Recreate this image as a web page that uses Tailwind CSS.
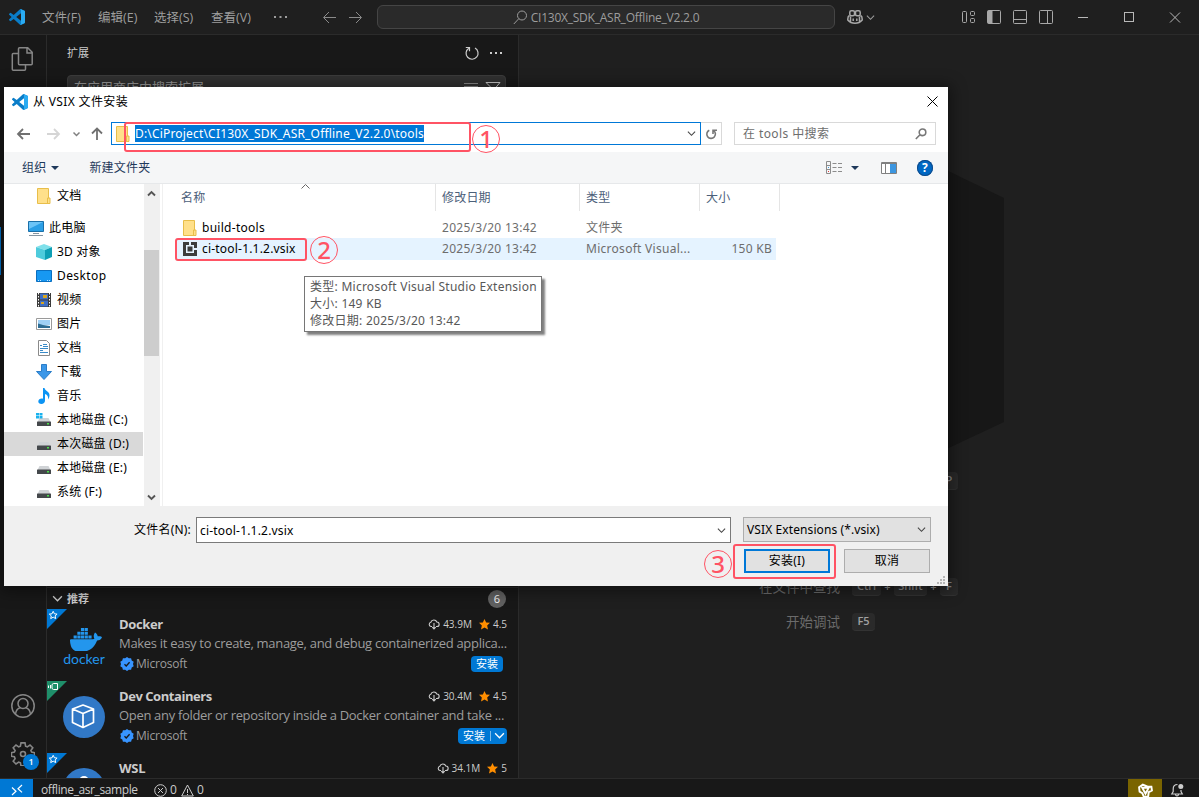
<!DOCTYPE html>
<html lang="zh-CN">

<head>
    <meta charset="UTF-8" />
    <meta name="viewport" content="width=device-width, initial-scale=1.0">
    <title>CI130X_SDK_ASR_Offline_V2.2.0</title>
    <script src="https://cdn.jsdelivr.net/npm/@tailwindcss/browser@4"></script>
</head>

<body class="bg-[#181818]">
    <!-- shared icons -->
    <svg class="hidden">
        <symbol id="vscode" viewBox="0 0 24 24">
            <path fill="#0a7dc8" d="M23.15 2.587L18.21.21a1.494 1.494 0 0 0-1.705.29l-9.46 8.63-4.12-3.128a.999.999 0 0 0-1.276.057L.327 7.261A1 1 0 0 0 .326 8.74L3.899 12 .326 15.26a1 1 0 0 0 .001 1.479L1.65 17.94a.999.999 0 0 0 1.276.057l4.12-3.128 9.46 8.63a1.492 1.492 0 0 0 1.704.29l4.942-2.377A1.5 1.5 0 0 0 24 20.06V3.939a1.5 1.5 0 0 0-.85-1.352zm-5.146 14.861L10.826 12l7.178-5.448v10.896z" />
            <path fill="#2aabf2" d="M18.21.21 23.15 2.587A1.5 1.5 0 0 1 24 3.939V20.06a1.5 1.5 0 0 1-.85 1.35l-4.94 2.38a1.49 1.49 0 0 1-1.7-.29c.55.4 1.49 0 1.49-1V1.5c0-1-.94-1.4-1.49-1a1.49 1.49 0 0 1 1.7-.29z" />
        </symbol>
        <symbol id="folder" viewBox="0 0 14 16">
            <path fill="#ffe08a" stroke="#e8be4a" d="M.5.5h11v9.500h1.500v5.500H.5z" />
            <path stroke="#e8be4a" d="M10.500 15v-5H12" fill="none" />
        </symbol>
        <symbol id="drive" viewBox="0 0 16 16">
            <path fill="#d0d3d6" d="M3.500 6h9l2 4h-13z" />
            <rect x="1" y="9.500" width="14" height="4.500" rx=".6" fill="#44484b" />
            <rect x="11" y="11" width="2" height="1.500" fill="#4be04b" />
        </symbol>
        <symbol id="cloud" viewBox="0 0 12 12">
            <path fill="none" stroke="#ccc" stroke-width="1.100" d="M4 8.500H3A2.200 2.200 0 0 1 2.900 4.200 3.100 3.100 0 0 1 8.800 4 2.200 2.200 0 0 1 9 8.500H8M6 5v5.800M4.300 9.200 6 10.900l1.700-1.700" />
        </symbol>
        <symbol id="star" viewBox="0 0 12 12">
            <path fill="#ff8e00" d="M6 0 7.800 3.800l4.200.4-3.100 2.900.9 4.300L6 9.300l-3.800 2.100.9-4.300L0 4.200l4.200-.4z" />
        </symbol>
        <symbol id="verified" viewBox="0 0 14 14">
            <path fill="#3794ff" d="M7 0l1.800 1.300 2.300-.1.600 2.200L13.700 4.800 13 7l.7 2.200-2 1.400-.6 2.200-2.300-.1L7 14l-1.800-1.300-2.300.1-.6-2.200-2-1.400L1 7 .3 4.800l2-1.400.6-2.200 2.300.1z" />
            <path fill="none" stroke="#181818" stroke-width="1.300" d="M4.500 7.300 6.200 9l3.400-3.800" />
        </symbol>
        <symbol id="chev" viewBox="0 0 10 10">
            <path fill="none" stroke="currentColor" stroke-width="1.200" d="M1 3l4 4 4-4" />
        </symbol>
        <symbol id="badge-star" viewBox="0 0 20 20">
            <path fill="#0078d4" d="M0 0h20L0 20z" />
            <path fill="none" stroke="#fff" d="M6.200 2.300 7.400 4.800l2.700.3-2 1.800.6 2.700-2.500-1.400-2.500 1.400.6-2.700-2-1.800 2.700-.3z" />
        </symbol>
    </svg>

    <div class="relative w-[1199px] h-[797px] overflow-hidden flex flex-col bg-[#181818] text-[#ccc] font-['Open_Sans','Noto_Sans_CJK_SC',sans-serif]">

        <!-- Title bar -->
        <header class="h-[35px] shrink-0 flex items-center bg-[#1f1f1f] border-b border-[#2b2b2b] text-[13px] text-[#9d9d9d]">
            <svg class="w-4 h-4 ml-[9px] mr-[17px]"><use href="#vscode" /></svg>
            <nav class="flex items-center w-[278px] whitespace-nowrap text-[12.5px]">
                <span class="w-14 pt-0.5">文件(F)</span>
                <span class="w-14 pt-0.5">编辑(E)</span>
                <span class="w-[57px] pt-0.5">选择(S)</span>
                <span class="w-[62px] pt-0.5">查看(V)</span>
                <svg class="w-4 h-5" viewBox="0 0 16 20" fill="#9d9d9d"><path d="M1 9h2v2H1zM6.500 9h2v2h-2zM12 9h2v2h-2z" /></svg>
            </nav>
            <svg class="w-[42px] h-4 mr-[15px]" viewBox="0 0 42 16" fill="none" stroke="#8a8a8a"><path d="M4 8.500h12M9 3 3.500 8.500 9 14M29 8.500h12M36 3l5.500 5.500L36 14" /></svg>
            <div class="w-[458px] h-6 rounded-md border border-[#454545] bg-[#2a2a2a] flex items-center justify-center gap-[3px] text-[12px] tracking-[-0.23px]">
                <svg class="w-[15px] h-[15px]" viewBox="0 0 15 15" fill="none" stroke="#9d9d9d"><circle cx="9" cy="5.500" r="4.500" /><path d="M5.800 8.700.8 14" /></svg>
                <span class="pt-0.5">CI130X_SDK_ASR_Offline_V2.2.0</span>
            </div>
            <svg class="w-4 h-4 ml-3" viewBox="0 0 16 16" fill="none" stroke="#a8a8a8" stroke-width="1.500"><rect x="2.800" y="1.800" width="4.700" height="5" rx="1.500" /><rect x="8.500" y="1.800" width="4.700" height="5" rx="1.500" /><path d="M2.500 6.500C.5 7.500.8 9 .8 11c2 2.500 5 3.300 7.200 3.300s5.200-.8 7.200-3.300c0-2 .3-3.500-1.700-4.500M3.500 7.500v5M12.500 7.500v5M6.200 9.500v2.500M9.800 9.500v2.500" /></svg>
            <svg class="w-[9px] h-[9px] ml-[3px]"><use href="#chev" /></svg>
            <div class="ml-auto flex">
                <svg class="w-[104px] h-4" viewBox="0 0 104 16" fill="none" stroke="#a8a8a8">
                    <rect x="7.500" y="2.500" width="4" height="11" rx="1" /><rect x="15.500" y="2.500" width="4" height="4" rx="1" /><rect x="15.500" y="9.500" width="4" height="4" rx="1" />
                    <rect x="32.500" y="1.500" width="13" height="13" rx="1" /><path fill="#a8a8a8" d="M33 2h4v12h-4z" />
                    <rect x="58.500" y="1.500" width="13" height="13" rx="1" /><path d="M59 10.500h12" />
                    <rect x="84.500" y="1.500" width="13" height="13" rx="1" /><path d="M92.500 2v12" />
                </svg>
                <svg class="w-[140px] h-4" viewBox="0 0 140 16" fill="none" stroke="#b8b8b8"><path d="M19 8.500h10" /><rect x="65.500" y="3.500" width="9" height="9" /><path d="m111 3.500 10 10m0-10-10 10" /></svg>
            </div>
        </header>

        <main class="h-[743px] shrink-0 flex">
            <!-- Activity bar -->
            <aside class="w-[47px] shrink-0 border-r border-[#2b2b2b] flex flex-col">
                <div class="h-12 flex items-center justify-center">
                    <svg class="w-6 h-6" viewBox="0 0 24 24" fill="none" stroke="#868686" stroke-width="1.500"><path d="M8.500.8h8.200l4.500 4.500v11.400a1 1 0 0 1-1 1H8.500a1 1 0 0 1-1-1V1.800a1 1 0 0 1 1-1zM16 1v5h5M7 6.500H2.300a1 1 0 0 0-1 1v14.700a1 1 0 0 0 1 1h11.200a1 1 0 0 0 1-1V18" /></svg>
                </div>
                <div class="h-36"></div>
                <div class="h-12 border-l border-[#0078d4]"></div>
                <div class="mt-auto h-12 flex items-center justify-center">
                    <svg class="w-6 h-6" viewBox="0 0 24 24" fill="none" stroke="#868686" stroke-width="1.500"><circle cx="12" cy="12" r="11.200" /><circle cx="12" cy="9.500" r="5" /><path d="M4.500 20c.5-3.500 2.500-6 5-6.300M19.500 20c-.5-3.500-2.500-6-5-6.300" /></svg>
                </div>
                <div class="relative h-12 flex items-center justify-center">
                    <svg class="w-6 h-6" viewBox="0 0 24 24" fill="none" stroke="#868686" stroke-width="1.600"><path d="M10 .9h4l.6 3.300 1.700.7 2.700-1.900L21.800 5.800l-1.900 2.700.7 1.600 3 .6v3.600l-3 .5-.7 1.800 1.900 2.600-2.800 2.800-2.700-1.900-1.700.7-.6 3H10l-.6-3-1.700-.7L5 22 2.200 19.200l1.900-2.600-.7-1.800-3-.5v-3.600l3-.6.7-1.600L2.200 5.800 5 3l2.700 1.900 1.700-.7z" /><circle cx="12" cy="12" r="2.500" /></svg>
                    <span class="absolute left-[23px] top-6 w-4 h-4 rounded-full bg-[#0078d4] text-white text-[9px] font-semibold leading-4 text-center">1</span>
                </div>
            </aside>

            <!-- Extensions side bar -->
            <section class="w-[472px] shrink-0 border-r border-[#2b2b2b] flex flex-col">
                <div class="h-[35px] pl-5 pr-[14px] flex items-center text-[11px]">
                    <span class="pt-0.5">扩展</span>
                    <svg class="ml-auto w-4 h-4 mr-2" viewBox="0 0 16 16" fill="none" stroke="#ccc" stroke-width="1.200"><path d="M4.800 3.200A6 6 0 1 0 11 3M1.800 2.500h3.700v3.700" /></svg>
                    <svg class="w-4 h-4" viewBox="0 0 16 16" fill="#ccc"><path d="M2 7h2v2H2zM7 7h2v2H7zM12 7h2v2h-2z" /></svg>
                </div>
                <div class="mt-[5px] ml-5 mr-3 h-[26px] pr-[3px] rounded-sm border border-[#3c3c3c] bg-[#313131] flex items-center text-[13px] text-[#989898]">
                    <span class="pl-1.5">在应用商店中搜索扩展</span>
                    <svg class="ml-auto w-[38px] h-4" viewBox="0 0 38 16" fill="none" stroke="#c5c5c5"><path stroke="#888" d="M0 3.500h14M0 6.500h14" /><path d="M22 2.500h14L31 8.500v4h-3v-4z" /></svg>
                </div>
                <div class="mt-auto h-[191px] overflow-hidden border-t border-[#2b2b2b]">
                    <div class="h-[21px] pl-[5px] pr-3 flex items-center text-[11px] font-bold">
                        <svg class="w-[11px] h-[11px] mr-1"><use href="#chev" /></svg>
                        <span class="pt-0.5">推荐</span>
                        <span class="ml-auto w-[18px] h-[18px] rounded-full bg-[#616161] text-[#f8f8f8] text-[11px] leading-[18px] text-center font-normal">6</span>
                    </div>

                    <div class="relative h-[72px] pl-4 pr-[11px] flex gap-[14px]">
                        <svg class="absolute left-0 top-0 w-5 h-5"><use href="#badge-star" /></svg>
                        <div class="w-[42px] shrink-0 pt-[17px] flex flex-col items-center">
                            <svg class="w-8 h-[25px] ml-1" viewBox="0 2 24 18" preserveAspectRatio="none" fill="#2396ed">
                                <path d="M8.200 3.400h2.400v2.200H8.200zM2.700 8.800h2.400V11H2.700zM5.500 8.800h2.400V11H5.500zM8.200 8.800h2.400V11H8.200zM11 8.800h2.400V11H11zM13.800 8.800h2.400V11h-2.400zM5.500 6.100h2.400v2.200H5.500zM8.200 6.100h2.400v2.200H8.200zM11 6.100h2.400v2.200H11zM11 3.400h2.400v2.200H11z" />
                                <path d="M23.763 9.890c-.065-.051-.672-.51-1.954-.51-.338.001-.676.03-1.010.087-.248-1.700-1.653-2.530-1.716-2.566l-.344-.199-.226.327c-.284.438-.49.922-.612 1.430-.23.97-.09 1.882.403 2.661-.595.332-1.550.413-1.744.420H.751a.751.751 0 0 0-.75.748 11.376 11.376 0 0 0 .692 4.062c.545 1.428 1.355 2.480 2.410 3.124 1.180.723 3.100 1.137 5.275 1.137.983.003 1.963-.086 2.930-.266a12.248 12.248 0 0 0 3.823-1.389c.98-.567 1.860-1.288 2.610-2.136 1.252-1.418 1.998-2.997 2.553-4.400h.221c1.372 0 2.215-.549 2.680-1.009.309-.293.55-.65.707-1.046l.098-.288Z" />
                            </svg>
                            <span class="font-[Lato] text-[14px] leading-4 text-[#2396ed]">docker</span>
                        </div>
                        <div class="flex-1 min-w-0 pt-1.5 text-[13px]">
                            <div class="h-[18px] flex items-center text-[10px]">
                                <span class="mr-auto pt-0.5 text-[13px] font-bold tracking-[-0.35px]">Docker</span>
                                <svg class="w-3 h-3 mr-[3px]"><use href="#cloud" /></svg>43.9M
                                <svg class="w-[11px] h-[11px] ml-[7px] mr-[3px]"><use href="#star" /></svg>4.5
                            </div>
                            <p class="leading-5 text-[#9d9d9d] whitespace-nowrap tracking-[-0.3px]">Makes it easy to create, manage, and debug containerized applica...</p>
                            <div class="h-[21px] flex items-center text-[#9d9d9d] text-[12px] tracking-[-0.2px]">
                                <svg class="w-[14px] h-[14px] ml-px mr-[2px]"><use href="#verified" /></svg>Microsoft
                                <span class="ml-auto mr-1 w-8 h-4 rounded-sm bg-[#0078d4] text-white text-[11px] leading-4 text-center tracking-normal">安装</span>
                            </div>
                        </div>
                    </div>

                    <div class="relative h-[72px] pl-4 pr-[11px] flex gap-[14px]">
                        <svg class="absolute left-0 top-0 w-5 h-5" viewBox="0 0 20 20"><path fill="#1f8f6a" d="M0 0h20L0 20z" /><path fill="none" stroke="#fff" d="M6.500 2.500h4v6h-4l-1.500-1v-4zM3.500 4v3.500M1.500 4.500v2.500" /></svg>
                        <svg class="w-[42px] h-[42px] mt-[15px] shrink-0" viewBox="0 0 42 42"><circle cx="21" cy="21" r="21" fill="#3178c6" /><path fill="none" stroke="#fff" stroke-width="1.700" stroke-linejoin="round" d="m20 9 10.500 4v13.500L20 31.500 9.500 26.500V13zM9.500 13 20 17.500 30.500 13M20 17.500v14" /></svg>
                        <div class="flex-1 min-w-0 pt-1.5 text-[13px]">
                            <div class="h-[18px] flex items-center text-[10px]">
                                <span class="mr-auto pt-0.5 text-[13px] font-bold tracking-[-0.45px]">Dev Containers</span>
                                <svg class="w-3 h-3 mr-[3px]"><use href="#cloud" /></svg>30.4M
                                <svg class="w-[11px] h-[11px] ml-[7px] mr-[3px]"><use href="#star" /></svg>4.5
                            </div>
                            <p class="leading-5 text-[#9d9d9d] whitespace-nowrap tracking-[-0.32px]">Open any folder or repository inside a Docker container and take ...</p>
                            <div class="h-[21px] flex items-center text-[#9d9d9d] text-[12px] tracking-[-0.2px]">
                                <svg class="w-[14px] h-[14px] ml-px mr-[2px]"><use href="#verified" /></svg>Microsoft
                                <span class="ml-auto w-[49px] h-4 rounded-sm bg-[#0078d4] text-white text-[11px] leading-4 pl-[5px] flex items-center tracking-normal">安装<i class="w-px h-2.5 ml-[5px] mr-[3px] bg-white/50"></i><svg class="w-[11px] h-[11px]"><use href="#chev" /></svg></span>
                            </div>
                        </div>
                    </div>

                    <div class="relative h-[72px] pl-4 pr-[11px] flex gap-[14px]">
                        <svg class="absolute left-0 top-0 w-5 h-5"><use href="#badge-star" /></svg>
                        <svg class="w-[42px] h-[42px] mt-[15px] shrink-0" viewBox="0 0 42 42"><circle cx="21" cy="21" r="21" fill="#3178c6" /><circle cx="21" cy="13" r="5" fill="#fff" /></svg>
                        <div class="flex-1 min-w-0 pt-1.5 text-[13px]">
                            <div class="h-[18px] flex items-center text-[10px]">
                                <span class="mr-auto pt-0.5 text-[13px] font-bold tracking-[-0.3px]">WSL</span>
                                <svg class="w-3 h-3 mr-[3px]"><use href="#cloud" /></svg>34.1M
                                <svg class="w-[11px] h-[11px] ml-[7px] mr-[3px]"><use href="#star" /></svg>5
                            </div>
                        </div>
                    </div>
                </div>
            </section>

            <!-- Editor watermark -->
            <section class="relative flex-1 bg-[#1f1f1f] pt-[437px] pl-[231px] text-[13.500px] text-[#6b6b6b]">
                <svg class="absolute left-[421px] top-[130px] w-[70px] h-[290px]" viewBox="0 0 70 290"><path fill="#171717" d="M0 2 64 33v224L0 287z" /></svg>
                <div class="relative w-[208px] text-[11px] font-semibold leading-4">
                    <div class="h-[18px] flex justify-end"><kbd class="w-[18px] h-[18px] rounded bg-[#2a2a2a] border-b border-[#333] text-center font-[Open_Sans] text-[#8a8a8a]">P</kbd></div>
                    <div class="mt-[88px] h-[18px] flex items-center justify-end text-[#8a8a8a]">
                        <span class="mr-3 shrink-0 text-[13.500px] font-normal text-[#6b6b6b]">在文件中查找</span>
                        <kbd class="w-[29px] shrink-0 h-[18px] rounded bg-[#2a2a2a] border-b border-[#333] text-center font-[Open_Sans]">Ctrl</kbd>
                        <span class="w-[13px] shrink-0 text-center">+</span>
                        <kbd class="w-[33px] shrink-0 h-[18px] rounded bg-[#2a2a2a] border-b border-[#333] text-center font-[Open_Sans]">Shift</kbd>
                        <span class="w-[13px] shrink-0 text-center">+</span>
                        <kbd class="w-[18px] shrink-0 h-[18px] rounded bg-[#2a2a2a] border-b border-[#333] text-center font-[Open_Sans]">F</kbd>
                    </div>
                    <div class="mt-[17px] h-[18px] flex items-center text-[#8a8a8a]">
                        <span class="ml-9 w-[66px] whitespace-nowrap text-[13.500px] font-normal text-[#6b6b6b]">开始调试</span>
                        <kbd class="w-[23px] h-[18px] rounded bg-[#2a2a2a] border-b border-[#333] text-center font-[Open_Sans] text-[#a0a0a0]">F5</kbd>
                    </div>
                </div>
            </section>
        </main>

        <!-- Status bar -->
        <footer class="h-[23px] shrink-0 flex items-center border-t border-[#2b2b2b] text-[12px] text-[#ccc]">
            <div class="w-[33px] h-full bg-[#0078d4] flex items-center justify-center mr-2">
                <svg class="w-3 h-3" viewBox="0 0 12 12" fill="none" stroke="#fff" stroke-width="1.200"><path d="m1 3.500 4 3.700L1 11M11 1 7 4.700l4 3.700" /></svg>
            </div>
            <span class="w-[113px] tracking-[-0.4px]">offline_asr_sample</span>
            <svg class="w-[13px] h-[13px] mr-[3px]" viewBox="0 0 13 13" fill="none" stroke="#ccc"><circle cx="6.500" cy="6.500" r="5.800" /><path d="m4 4 5 5m0-5L4 9" /></svg>0
            <svg class="w-[13px] h-[13px] ml-1 mr-[3px]" viewBox="0 0 13 13" fill="none" stroke="#ccc"><path d="M6.500 1 12.300 12H.7zM6.500 5v4M6.500 10v1" /></svg>0
            <div class="ml-auto w-[34px] h-full bg-[#7a6400] flex items-center justify-center">
                <svg class="w-[15px] h-[15px]" viewBox="0 0 14 14" fill="none" stroke="#fff" stroke-width="1.800"><path d="M1 4 4.500 1.500 9 3.500 12.500 3.500 13 7 10 8.500 9.500 12.500 5.500 13 4 9.500 1.500 8zM4 4.500h6L7 10z" /></svg>
            </div>
            <svg class="w-[14px] h-[14px] ml-2 mr-[15px]" viewBox="0 0 14 14" fill="none" stroke="#ccc" stroke-width="1.200"><path d="M7.500 1.500C4.500 1.500 3.200 3.500 3.200 6v2.500L1.800 11h10.500L11 8.500V7M5.500 11.500c.3 1.800 2.700 1.800 3 0" /><circle cx="10.800" cy="3.500" r="2.500" fill="#ccc" stroke="none" /></svg>
        </footer>

        <!-- File dialog window -->
        <div class="absolute left-1 top-[87px] w-[944px] h-[499px] bg-white shadow-[0_2px_14px_4px_rgba(0,0,0,0.4)] flex flex-col text-[12px] tracking-[0.2px] text-black font-['Noto_Sans','Noto_Sans_CJK_SC',sans-serif]">
            <div class="h-[29px] shrink-0 pl-2 pr-2.5 flex items-center">
                <svg class="w-4 h-4 mr-[5px]"><use href="#vscode" /></svg>
                <span class="tracking-[0.35px]">从 VSIX 文件安装</span>
                <svg class="ml-auto w-[11px] h-[11px]" viewBox="0 0 11 11" stroke="#000"><path d="m.5.5 10 10m0-10-10 10" /></svg>
            </div>

            <div class="h-9 shrink-0 pt-[6px] pl-3 pr-3 flex items-start">
                <svg class="w-[95px] h-[23px]" viewBox="0 0 95 23" fill="none" stroke-width="1.800">
                    <path stroke="#707070" d="M2 12h12M7 7l-5 5 5 5" />
                    <path stroke="#d5d5d5" d="M31 12h12M38 7l5 5-5 5" />
                    <path stroke="#808080" stroke-width="1.500" d="m57.500 10.500 3 3 3-3" />
                    <path stroke="#707070" d="M81 18V7M76 11.500l5-5 5 5" />
                </svg>
                <div class="w-[590px] h-[23px] border border-[#0078d7] pl-1 pr-[4px] flex items-center">
                    <svg class="w-[14px] h-4 mr-[5px]"><use href="#folder" /></svg>
                    <span class="h-[17px] leading-[17px] bg-[#0078d7] text-white whitespace-nowrap tracking-[0.18px]">D:\CiProject\CI130X_SDK_ASR_Offline_V2.2.0\tools</span>
                    <svg class="ml-auto w-[9px] h-[9px] text-[#444]"><use href="#chev" /></svg>
                </div>
                <div class="w-[21px] h-[23px] border border-l-0 border-[#d9d9d9] flex items-center justify-center mr-3">
                    <svg class="w-3 h-3" viewBox="0 0 12 12" fill="none" stroke="#777" stroke-width="1.600"><path d="M4.300 2.200a4.300 4.300 0 1 0 4 .2M8 6V2.200h4" /></svg>
                </div>
                <div class="w-[202px] h-[23px] border border-[#d9d9d9] pl-2 pr-2 flex items-center text-[#6d6d6d]">
                    <span class="tracking-[0.4px]">在 tools 中搜索</span>
                    <svg class="ml-auto w-3 h-3" viewBox="0 0 12 12" fill="none" stroke="#777" stroke-width="1.600"><circle cx="7.500" cy="4.300" r="3.300" /><path d="M5 6.800.8 11" /></svg>
                </div>
            </div>

            <div class="h-8 shrink-0 bg-[#f5f6f7] border-b border-[#e6e8ea] pl-[18px] pr-[15px] flex items-center text-[#1e395b]">
                <span>组织</span>
                <svg class="w-2 h-1 ml-[5px] mr-[30px]" viewBox="0 0 8 4"><path fill="#1e395b" d="M0 0h8L4 4z" /></svg>
                <span>新建文件夹</span>
                <svg class="ml-auto w-4 h-[14px]" viewBox="0 0 16 14" fill="none" stroke="#8c8c8c"><path d="M.5.5h4v12h-4zM.5 4.500h4M.5 8.500h4M6.500 2.500h4M12 2.500h4M6.500 6.500h4M12 6.500h4M6.500 10.500h4M12 10.500h4" /><path stroke="none" fill="#3c9be0" d="M2 6h1v1H2z" /><path stroke="none" fill="#e03c3c" d="M2 10h1v1H2z" /></svg>
                <svg class="w-2 h-1 ml-[9px] mr-[22px]" viewBox="0 0 8 4"><path fill="#1e395b" d="M0 0h8L4 4z" /></svg>
                <svg class="w-4 h-3 mr-5" viewBox="0 0 16 12"><path fill="#fff" stroke="#808080" d="M.5.5h15v11H.5z" /><path stroke="#808080" d="M4.500 1v10M.5 1.500h15" /><path fill="#3c96e0" d="M9 2h6v9H9z" /></svg>
                <span class="w-4 h-4 rounded-full bg-[#0068c4] ring-1 ring-inset ring-[#104a88] text-white text-[12px] leading-4 font-bold text-center">?</span>
            </div>

            <div class="h-[322px] shrink-0 flex">
                <!-- Navigation tree -->
                <ul class="w-[139px] h-[322px] overflow-hidden shrink-0 mr-px whitespace-nowrap">
                    <li class="h-6 mb-2 pl-8 flex items-center gap-[5px]"><svg class="w-4 h-4"><use href="#folder" /></svg>文档</li>
                    <li class="h-6 pl-6 flex items-center gap-[5px]">
                        <svg class="w-4 h-4" viewBox="0 0 16 16"><path fill="#2b9fe6" stroke="#1a6fa8" d="M.5 1.500h15v10H.5z" /><path fill="#6cc4f7" d="M1 2h14L1 9z" /><path stroke="#8795a1" d="M5 13.500h6M1 15.500h14" /></svg>此电脑</li>
                    <li class="h-6 pl-8 flex items-center gap-[5px]">
                        <svg class="w-4 h-4" viewBox="0 0 16 16"><path fill="#7fe0ea" d="m8 0 8 3-7 3-9-3z" /><path fill="#4ecbdc" d="m0 3 9 3v10l-9-3z" /><path fill="#0e9fb5" d="m9 6 7-3v10l-7 3z" /></svg>3D 对象</li>
                    <li class="h-6 pl-8 flex items-center gap-[5px]">
                        <svg class="w-4 h-4" viewBox="0 0 16 16"><path fill="#1798f2" stroke="#0a6fc0" d="M.5 2.500h15v11H.5z" /><path stroke="#bfe3ff" stroke-dasharray="1 1" d="M2 12.500h3M11 12.500h3" /></svg><span class="tracking-[0.4px]">Desktop</span></li>
                    <li class="h-6 pl-8 flex items-center gap-[5px]">
                        <svg class="w-4 h-4" viewBox="0 0 16 16"><path fill="#3a3a3a" d="M1 1h14v14H1z" /><path stroke="#fff" stroke-dasharray="1.500 1.500" d="M2.500 1v14M13.500 1v14" /><path fill="#3f6fc4" d="M4 1.500h8v6H4zM4 8.500h8v6H4z" /><path fill="#d9a520" d="M7 3h4v3H7zM5 10h3v2H5z" /></svg>视频</li>
                    <li class="h-6 pl-8 flex items-center gap-[5px]">
                        <svg class="w-4 h-4" viewBox="0 0 16 16"><path fill="#fff" stroke="#9a9a9a" d="M.5 2.500h15v11H.5z" /><path fill="#9fd0f5" d="M2 4h12v5H2z" /><path fill="#2d6d94" d="M2 7.500 7 9l7 1v2H2z" /></svg>图片</li>
                    <li class="h-6 pl-8 flex items-center gap-[5px]">
                        <svg class="w-4 h-4" viewBox="0 0 16 16"><path fill="#fff" stroke="#8a8a8a" d="M2.500.5h8l3 3v12h-11z" /><path stroke="#3a8bc8" d="M7 4.500h4M7 6.500h5M4 8.500h8M4 10.500h3M4 12.500h8M4 5.500h2" /></svg>文档</li>
                    <li class="h-6 pl-8 flex items-center gap-[5px]">
                        <svg class="w-4 h-4" viewBox="0 0 16 16"><path fill="#3b97e8" stroke="#2a7dc8" d="M5.500.5h5v7h5L8 15.500.5 7.500h5z" /></svg>下载</li>
                    <li class="h-6 pl-8 flex items-center gap-[5px]">
                        <svg class="w-4 h-4" viewBox="0 0 16 16"><path fill="#0c94f4" d="M7 0h1.500c.3 3 5 3.500 5 7 0 2-.5 3-1.500 4.500.5-3-.5-4.500-3-5.500v6.500C9 14.500 7.500 16 5.300 16 3.500 16 2.300 15 2.300 13.500c0-2 2.500-3.500 4.700-2.700z" /></svg>音乐</li>
                    <li class="h-6 pl-8 flex items-center gap-[5px]">
                        <svg class="w-4 h-4" viewBox="0 0 16 16"><use href="#drive" /><path fill="#19b2ee" d="M0 1h3v2.500H0zM3.500 1h3v2.500h-3zM0 4h3v2.500H0zM3.500 4h3v2.500h-3z" /></svg>本地磁盘 (C:)</li>
                    <li class="h-6 pl-8 flex items-center gap-[5px] bg-[#d9d9d9]"><svg class="w-4 h-4"><use href="#drive" /></svg>本次磁盘 (D:)</li>
                    <li class="h-6 pl-8 flex items-center gap-[5px]"><svg class="w-4 h-4"><use href="#drive" /></svg>本地磁盘 (E:)</li>
                    <li class="h-6 pl-8 flex items-center gap-[5px]"><svg class="w-4 h-4"><use href="#drive" /></svg>系统 (F:)</li>
                </ul>
                <div class="w-4 shrink-0 bg-[#f0f0f0] flex flex-col items-center pt-[5px] pb-1 pr-px text-[#555]">
                    <svg class="w-[9px] h-[9px] rotate-180" viewBox="0 0 9 9" fill="none" stroke="#555" stroke-width="1.900"><path d="m1 2.500 3.500 3.500L8 2.500" /></svg>
                    <div class="mt-[52px] w-[15px] h-[106px] bg-[#cdcdcd]"></div>
                    <svg class="mt-auto w-[9px] h-[9px]" viewBox="0 0 9 9" fill="none" stroke="#555" stroke-width="1.900"><path d="m1 2.500 3.500 3.500L8 2.500" /></svg>
                </div>

                <!-- File list -->
                <div class="relative flex-1 ml-0.5 border-l border-[#f0f0f0]">
                    <svg class="absolute left-[138px] top-0 w-[9px] h-[5px]" viewBox="0 0 9 5" fill="none" stroke="#666"><path d="m.5 4.500 4-4 4 4" /></svg>
                    <div class="h-[27px] flex items-center leading-[27px] text-[#4c607a]">
                        <span class="w-[273px] pl-[18px] border-r border-[#e5e5e5]">名称</span>
                        <span class="w-36 pl-1.5 border-r border-[#e5e5e5]">修改日期</span>
                        <span class="w-[120px] pl-1.5 border-r border-[#e5e5e5]">类型</span>
                        <span class="w-20 pl-1.5 border-r border-[#e5e5e5]">大小</span>
                    </div>
                    <div class="mt-[6px] ml-[13px] w-[600px] h-[21px] flex items-center text-[#6d6d6d] tracking-[0.28px]">
                        <span class="w-[266px] pl-[7px] flex items-center text-black"><svg class="w-[14px] h-4 mr-[5px]"><use href="#folder" /></svg>build-tools</span>
                        <span class="w-36">2025/3/20 13:42</span>
                        <span class="w-[115px]">文件夹</span>
                    </div>
                    <div class="ml-[13px] w-[600px] h-[22px] flex items-center text-[#6d6d6d] bg-[#e5f3ff] tracking-[0.28px]">
                        <span class="w-[266px] pl-[7px] flex items-center text-black tracking-[0.2px]">
                            <svg class="w-[14px] h-[14px] mr-[5px]" viewBox="0 0 14 14"><path fill="#3c3c3c" d="M0 0h6v3H3v8h8V8h3v6H0zM8 0h6v6h-3V3H8z" /><path fill="#3c3c3c" d="M4.500 4.500h5v5h-5z" /></svg>ci-tool-1.1.2.vsix</span>
                        <span class="w-36">2025/3/20 13:42</span>
                        <span class="w-[115px]">Microsoft Visual...</span>
                        <span class="ml-auto pr-1">150 KB</span>
                    </div>
                </div>
            </div>

            <!-- Dialog footer -->
            <div class="flex-1 bg-[#f0f0f0] pt-[11px] pr-[17px]">
                <div class="flex">
                    <label class="w-[192px] pr-[5px] text-right leading-[26px]">文件名(N):</label>
                    <div class="w-[535px] h-[26px] mr-3 border border-[#7a7a7a] bg-white pl-[3px] pr-1 pt-px flex items-center">ci-tool-1.1.2.vsix<svg class="ml-auto w-[9px] h-[9px] text-[#444]"><use href="#chev" /></svg></div>
                    <div class="w-[188px] h-[25px] border border-[#adadad] bg-[#e1e1e1] pl-[3px] pr-1 flex items-center tracking-[0.1px]">VSIX Extensions (*.vsix)<svg class="ml-auto w-[9px] h-[9px] text-[#444]"><use href="#chev" /></svg></div>
                </div>
                <div class="mt-[6px] flex justify-end gap-[14px] pr-px leading-5">
                    <button class="w-[86px] h-6 border-2 border-[#0078d7] bg-[#e1e1e1] leading-5">安装(I)</button>
                    <button class="w-[86px] h-6 border border-[#adadad] bg-[#e1e1e1] leading-[22px]">取消</button>
                </div>
            </div>
            <svg class="absolute right-[3px] bottom-0.5 w-2 h-2" viewBox="0 0 8 8" fill="#b5b5b5"><path d="M6 0h2v2H6zM3 3h2v2H3zM6 3h2v2H6zM0 6h2v2H0zM3 6h2v2H3zM6 6h2v2H6z" /></svg>

            <!-- Tooltip -->
            <div class="absolute left-[300px] top-[189px] w-[238px] h-[56px] pt-px pl-[5px] border border-[#767676] bg-white text-[#575757] leading-[17px] whitespace-nowrap tracking-[0.26px] shadow-[3px_3px_2px_rgba(0,0,0,0.5)]">
                <p>类型: Microsoft Visual Studio Extension</p>
                <p>大小: 149 KB</p>
                <p>修改日期: 2025/3/20 13:42</p>
            </div>
        </div>

        <!-- Step markers -->
        <div class="absolute left-[124px] top-[122px] w-[347px] h-[30px] border-2 border-[#ff5364] rounded-[3px]"></div>
        <div class="absolute left-[175px] top-[238px] w-[132px] h-[23px] border-2 border-[#ff5364] rounded-[3px]"></div>
        <div class="absolute left-[733px] top-[544px] w-[103px] h-[35px] border-2 border-[#ff5364] rounded-[3px]"></div>
        <span class="absolute left-[472px] top-[125px] w-7 h-7 rounded-full border-[1.500px] border-[#ff5364] text-[#ff5364] text-[24px] font-medium leading-[25px] text-center font-['Noto_Sans']">1</span>
        <span class="absolute left-[310px] top-[236px] w-7 h-7 rounded-full border-[1.500px] border-[#ff5364] text-[#ff5364] text-[24px] font-medium leading-[25px] text-center font-['Noto_Sans']">2</span>
        <span class="absolute left-[704px] top-[550px] w-7 h-7 rounded-full border-[1.500px] border-[#ff5364] text-[#ff5364] text-[24px] font-medium leading-[25px] text-center font-['Noto_Sans']">3</span>
    </div>
</body>

</html>
